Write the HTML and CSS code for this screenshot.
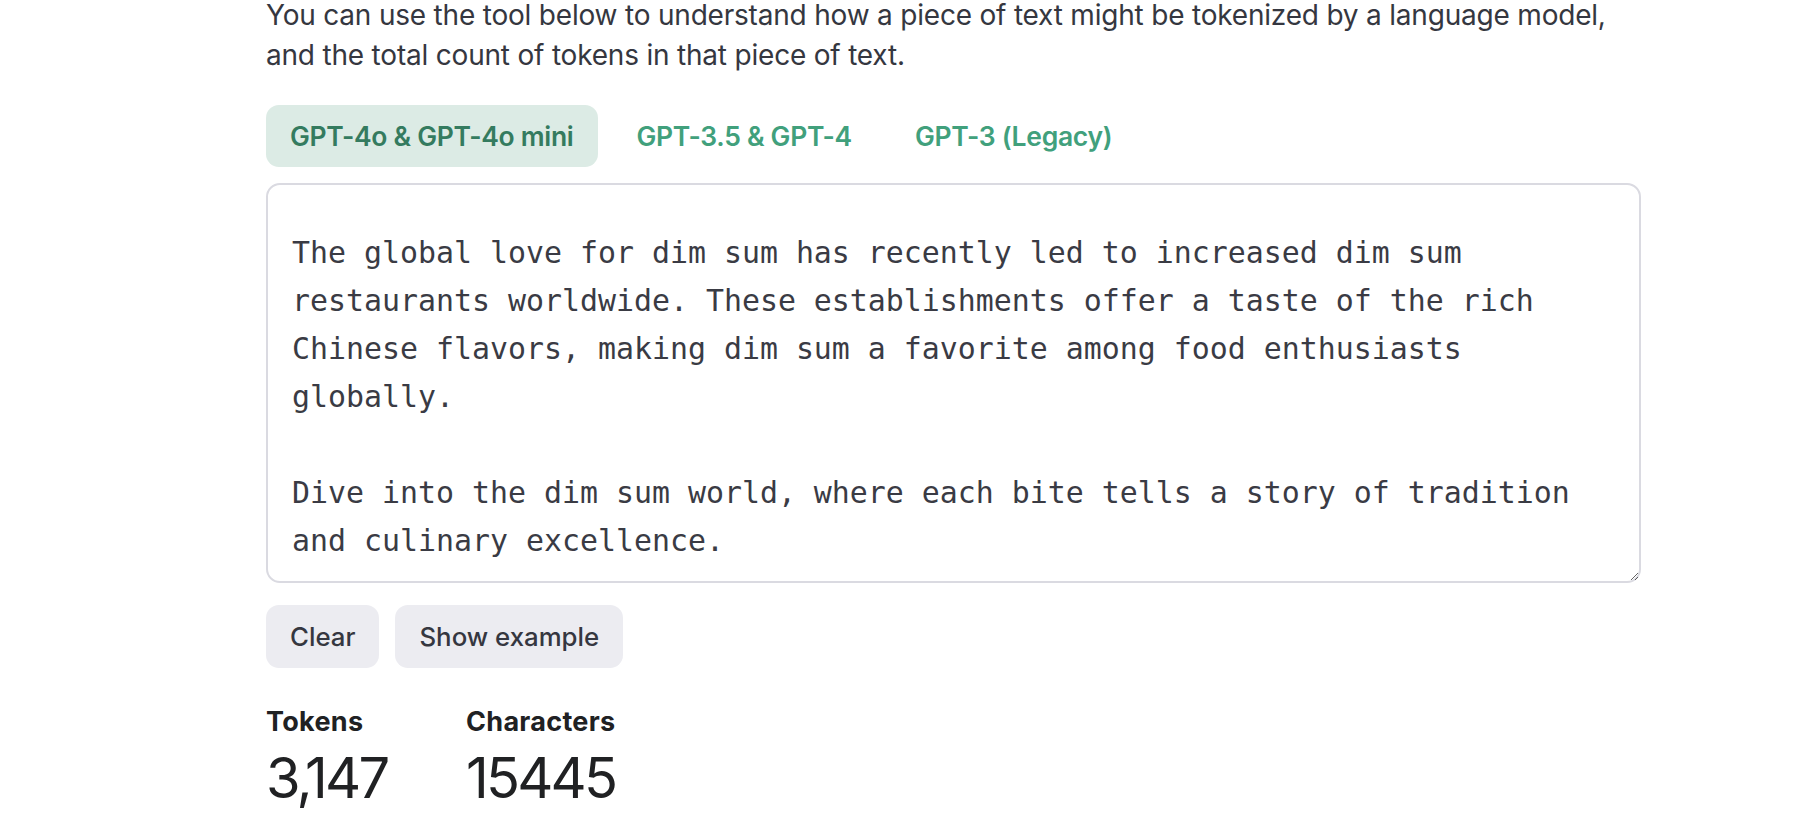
FILE: index.html
```html
<!DOCTYPE html>
<html lang="en">
<head>
<meta charset="utf-8">
<title>Tokenizer</title>
<link rel="stylesheet" href="styles.css">
</head>
<body>
<main class="page">
  <p class="intro">You can use the tool below to understand how a piece of text might be tokenized by a language model,<br>and the total count of tokens in that piece of text.</p>

  <div class="tabs">
    <button class="tab tab-active">GPT-4o &amp; GPT-4o mini</button>
    <button class="tab">GPT-3.5 &amp; GPT-4</button>
    <button class="tab">GPT-3 (Legacy)</button>
  </div>

  <textarea class="input" spellcheck="false">The global love for dim sum has recently led to increased dim sum restaurants worldwide. These establishments offer a taste of the rich Chinese flavors, making dim sum a favorite among food enthusiasts globally.

Dive into the dim sum world, where each bite tells a story of tradition and culinary excellence.</textarea>

  <div class="actions">
    <button class="btn">Clear</button>
    <button class="btn">Show example</button>
  </div>

  <div class="stats">
    <div class="stat">
      <div class="stat-label">Tokens</div>
      <div class="stat-value">3,147</div>
    </div>
    <div class="stat">
      <div class="stat-label">Characters</div>
      <div class="stat-value">15445</div>
    </div>
  </div>
</main>
</body>
</html>
```

FILE: styles.css
```css
html, body {
  margin: 0;
  padding: 0;
  background: #ffffff;
  overflow: hidden;
}

body {
  font-family: Inter, "Noto Sans", "Liberation Sans", sans-serif;
  color: #353740;
}

.page {
  padding-left: 266px;
  width: 1375px;
}

.intro {
  margin: -5px 0 0 0;
  font-size: 28px;
  line-height: 40px;
  letter-spacing: -0.2px;
  white-space: nowrap;
  color: #353740;
}

.tabs {
  display: flex;
  gap: 15px;
  margin-top: 30px;
}

.tab {
  font-family: inherit;
  font-size: 26.5px;
  font-weight: 600;
  height: 62px;
  padding: 0 24px;
  border: none;
  border-radius: 13px;
  background: transparent;
  color: #41a07c;
  letter-spacing: -0.3px;
  cursor: pointer;
}

.tab-active {
  background: #dcebe5;
  color: #347b5f;
}

.input {
  display: block;
  box-sizing: border-box;
  width: 1375px;
  height: 400px;
  margin-top: 16px;
  padding: 44px 24px 16px 24px;
  border: 2px solid #dadae1;
  border-radius: 14px;
  font-family: "DejaVu Sans Mono", "Liberation Mono", monospace;
  font-size: 29.9px;
  line-height: 48px;
  color: #3a3b44;
  resize: vertical;
  outline: none;
  overflow: hidden;
}

.actions {
  display: flex;
  gap: 16px;
  margin-top: 22px;
}

.btn {
  font-family: inherit;
  font-size: 25.8px;
  font-weight: 500;
  height: 63px;
  padding: 0 24px;
  border: none;
  border-radius: 13px;
  background: #ececf1;
  color: #353740;
  cursor: pointer;
}

.stats {
  display: flex;
  gap: 0;
  margin-top: 38px;
}

.stat {
  width: 200px;
}

.stat-label {
  font-size: 27px;
  font-weight: 700;
  line-height: 32px;
  letter-spacing: 0.3px;
  color: #202123;
}

.stat-value {
  font-size: 56px;
  font-weight: 400;
  line-height: 64px;
  letter-spacing: -2.8px;
  color: #202123;
  margin-top: 8px;
}
```
